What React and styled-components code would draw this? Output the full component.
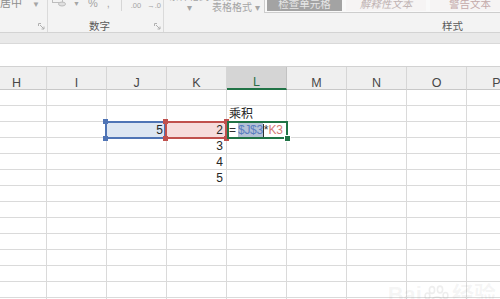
import React from "react";
import styled, { createGlobalStyle } from "styled-components";

const GlobalStyle = createGlobalStyle`
  html, body {
    margin: 0;
    padding: 0;
    background: #ffffff;
  }
  body {
    font-family: "Liberation Sans", "Noto Sans CJK SC", sans-serif;
  }
`;

const COLUMNS = ["H", "I", "J", "K", "L", "M", "N", "O", "P"];
const ROW_COUNT = 14;
const ACTIVE_COL = "L";

const TONES = {
  blue: { line: "#4f74b5", fill: "#dde6f2", text: "#5a7ec0" },
  red: { line: "#c0504d", fill: "#f6dcdc", text: "#d67a78" },
  green: { line: "#217346", fill: "transparent", text: "#217346" },
};

// ---- page frame ----
const Page = styled.div`
  position: relative;
  width: 500px;
  height: 299px;
  overflow: hidden;
  background: #ffffff;
  display: flex;
  flex-direction: column;
`;

// ---- ribbon ----
const RibbonViewport = styled.div`
  flex: none;
  height: 33px;
  box-sizing: border-box;
  overflow: hidden;
  background: #f3f3f3;
  border-bottom: 1px solid #d3d3d3;
  display: flex;
  flex-direction: column;
  justify-content: flex-end;
`;

const Ribbon = styled.div`
  flex: none;
  display: flex;
  height: 35px;
`;

const Group = styled.div`
  flex: none;
  width: ${(p) => p.$width}px;
  box-sizing: border-box;
  display: flex;
  flex-direction: column;
  border-right: 1px solid #dadada;
`;

const GroupBody = styled.div`
  height: 23px;
  display: flex;
  align-items: flex-start;
  justify-content: ${(p) => (p.$end ? "flex-end" : "flex-start")};
  padding-right: ${(p) => (p.$end ? 7 : 0)}px;
  overflow: hidden;
`;

const GroupFoot = styled.div`
  height: 12px;
  display: flex;
  align-items: center;
`;

const GroupLabel = styled.div`
  flex: 1;
  text-align: center;
  font-size: 10.5px;
  line-height: 12px;
  color: #5a5a5a;
`;

const Launcher = styled.div`
  flex: none;
  width: 12px;
  height: 12px;
  display: flex;
  align-items: center;
  justify-content: center;
`;

const Glyph = styled.span`
  flex: none;
  white-space: nowrap;
  font-size: ${(p) => p.$size || 11}px;
  line-height: 12px;
  margin-left: ${(p) => p.$gap || 0}px;
  padding-top: ${(p) => p.$drop || 0}px;
  color: ${(p) => p.$color || "#a5a5a5"};
`;

const RibbonDivider = styled.span`
  flex: none;
  width: 1px;
  height: 14px;
  margin-left: ${(p) => p.$gap}px;
  background: #d6d6d6;
`;

const StackButton = styled.div`
  flex: none;
  width: ${(p) => p.$width}px;
  margin-left: ${(p) => p.$gap || 0}px;
  height: 16px;
  display: flex;
  flex-direction: column;
  align-items: ${(p) => (p.$left ? "flex-start" : "center")};
  justify-content: flex-end;
  font-size: 10px;
  line-height: 11px;
  color: #a5a5a5;
  white-space: nowrap;
`;

const Gallery = styled.div`
  flex: none;
  margin-left: 2px;
  height: 16px;
  box-sizing: border-box;
  display: flex;
  gap: 4px;
  padding: 0 2px 1px;
  background: #f9f9f9;
  border: 1px solid #cdcdcd;
  border-top: none;
`;

const GalleryItem = styled.div`
  flex: none;
  width: ${(p) => p.$width}px;
  display: flex;
  align-items: center;
  justify-content: center;
  font-size: 10.5px;
  line-height: 12px;
  background: ${(p) => p.$bg};
  color: ${(p) => p.$color};
  font-style: ${(p) => (p.$italic ? "italic" : "normal")};
  white-space: nowrap;
`;

// ---- bars under the ribbon ----
const Band = styled.div`
  flex: none;
  height: 11px;
  box-sizing: border-box;
  background: #e9e9e9;
  border-bottom: 1px solid #d9d9d9;
`;

const FormulaBar = styled.div`
  flex: none;
  height: 23px;
  box-sizing: border-box;
  background: #ffffff;
  border-bottom: 1px solid #d2d2d2;
`;

// ---- worksheet ----
const Sheet = styled.div`
  flex: 1;
  display: flex;
  flex-direction: column;
  margin-left: -13px;
`;

const HeaderRow = styled.div`
  flex: none;
  display: flex;
  height: 23px;
`;

const HeaderCell = styled.div`
  flex: none;
  width: 60px;
  height: 100%;
  box-sizing: border-box;
  display: flex;
  align-items: flex-end;
  justify-content: center;
  padding-bottom: 1px;
  font-size: 12.5px;
  line-height: 10px;
  background: ${(p) => (p.$active ? "#d5d5d5" : "#efefef")};
  color: ${(p) => (p.$active ? "#2b6e48" : "#474747")};
  border-right: 1px solid ${(p) => (p.$active ? "#c2c2c2" : "#d6d6d6")};
  border-bottom: ${(p) => (p.$active ? "2px solid #217346" : "1px solid #c8c8c8")};
`;

const Row = styled.div`
  flex: none;
  display: flex;
  height: 16px;
`;

const Cell = styled.div`
  position: relative;
  flex: none;
  width: 60px;
  height: 100%;
  box-sizing: border-box;
  display: flex;
  align-items: flex-end;
  justify-content: ${(p) => (p.$right ? "flex-end" : "flex-start")};
  padding: 0 ${(p) => (p.$right ? 3 : 2)}px;
  font-size: 12px;
  line-height: 14px;
  color: #262626;
  white-space: nowrap;
  background: ${(p) => (p.$tone ? TONES[p.$tone].fill : "#ffffff")};
  border-right: 1px solid #dadada;
  border-bottom: 1px solid #dadada;
`;

const RangeBox = styled.div`
  position: absolute;
  z-index: 2;
  top: -1px;
  bottom: -2px;
  left: ${(p) => p.$left}px;
  right: ${(p) => p.$right}px;
  border: 2px solid ${(p) => TONES[p.$tone].line};
  pointer-events: none;
`;

const Handle = styled.span`
  position: absolute;
  width: 5px;
  height: 5px;
  background: ${(p) => TONES[p.$tone].line};
  ${(p) => (p.$top ? "top: -4px;" : "bottom: -4px;")}
  ${(p) => (p.$left ? "left: -4px;" : "right: -4px;")}
`;

const FillHandle = styled.span`
  position: absolute;
  right: -5px;
  bottom: -5px;
  width: 5px;
  height: 5px;
  background: #217346;
  border: 1px solid #ffffff;
`;

const Operator = styled.span`
  color: #303030;
  margin-right: ${(p) => p.$space || 0}px;
`;

const RefText = styled.span`
  color: ${(p) => TONES[p.$tone].text};
  background: ${(p) => (p.$selected ? "#b4c1d6" : "transparent")};
  letter-spacing: -0.3px;
`;

const Caret = styled.span`
  display: inline-block;
  width: 1px;
  height: 13px;
  background: #303030;
  vertical-align: -2px;
`;

const Watermark = styled.div`
  position: absolute;
  right: 4px;
  bottom: -8px;
  display: flex;
  align-items: flex-end;
  gap: 2px;
  font-size: 22px;
  font-weight: bold;
  line-height: 24px;
  color: rgba(150, 150, 150, 0.1);
  pointer-events: none;
`;

const LauncherIcon = () => (
  <svg width="7" height="7" viewBox="0 0 7 7">
    <path d="M0.5 3V0.5H3" stroke="#b0b0b0" fill="none" />
    <path d="M2 2L6 6M6 3.5V6H3.5" stroke="#b0b0b0" fill="none" />
  </svg>
);

const MoneyIcon = () => (
  <svg width="14" height="10" viewBox="0 0 14 10">
    <rect x="0.5" y="0.5" width="10" height="5" fill="none" stroke="#bdbdbd" />
    <ellipse cx="10" cy="7" rx="3.5" ry="2" fill="#e0e0e0" stroke="#bdbdbd" />
  </svg>
);

const PawIcon = () => (
  <svg width="26" height="22" viewBox="0 0 26 22">
    <g fill="none" stroke="rgba(150,150,150,0.16)" strokeWidth="1.6">
      <ellipse cx="8" cy="5" rx="2.6" ry="3.4" />
      <ellipse cx="16" cy="4.5" rx="2.6" ry="3.4" />
      <ellipse cx="3.5" cy="11" rx="2.4" ry="3" />
      <ellipse cx="21.5" cy="10.5" rx="2.4" ry="3" />
      <path d="M6 20c0-5 3.5-8 7-8s7 3 7 8c-2.5 1.5-11.5 1.5-14 0z" />
    </g>
  </svg>
);

const RibbonBar = () => (
  <RibbonViewport>
    <Ribbon>
      <Group $width={48}>
        <GroupBody $end>
          <Glyph $color="#8e8e8e">合并后居中</Glyph>
          <Glyph $size={8} $gap={10} $drop={2}>▼</Glyph>
        </GroupBody>
        <GroupFoot>
          <GroupLabel />
          <Launcher><LauncherIcon /></Launcher>
        </GroupFoot>
      </Group>

      <Group $width={116}>
        <GroupBody>
          <Glyph $gap={4}><MoneyIcon /></Glyph>
          <Glyph $size={7} $gap={7} $drop={1}>▼</Glyph>
          <Glyph $size={11} $gap={8}>%</Glyph>
          <Glyph $size={11} $gap={9}>,</Glyph>
          <RibbonDivider $gap={11} />
          <Glyph $size={7.5} $gap={9} $drop={3}>.00</Glyph>
          <Glyph $size={7.5} $gap={6} $drop={3}>→.0</Glyph>
        </GroupBody>
        <GroupFoot>
          <GroupLabel>数字</GroupLabel>
          <Launcher><LauncherIcon /></Launcher>
        </GroupFoot>
      </Group>

      <Group $width={590}>
        <GroupBody>
          <StackButton $width={46} $gap={2}>
            <span>条件格式</span>
            <span>▾</span>
          </StackButton>
          <StackButton $width={50} $left>
            <span>套用</span>
            <span>表格格式 ▾</span>
          </StackButton>
          <Gallery>
            <GalleryItem $width={75} $bg="#a3a3a3" $color="#e6e6e6">检查单元格</GalleryItem>
            <GalleryItem $width={80} $bg="#f6f4f4" $color="#c0b3b3" $italic>解释性文本</GalleryItem>
            <GalleryItem $width={80} $bg="#f6f4f4" $color="#c4aaaa">警告文本</GalleryItem>
          </Gallery>
        </GroupBody>
        <GroupFoot>
          <GroupLabel>样式</GroupLabel>
          <Launcher><LauncherIcon /></Launcher>
        </GroupFoot>
      </Group>
    </Ribbon>
  </RibbonViewport>
);

// cell contents keyed by "COL:row"
const CELLS = {
  "L:2": { kind: "text", value: "乘积" },
  "J:3": { kind: "number", value: 5, tone: "blue" },
  "K:3": { kind: "number", value: 2, tone: "red" },
  "L:3": { kind: "formula" },
  "K:4": { kind: "number", value: 3 },
  "K:5": { kind: "number", value: 4 },
  "K:6": { kind: "number", value: 5 },
};

const Corners = ({ tone }) => (
  <>
    <Handle $tone={tone} $top $left />
    <Handle $tone={tone} $top />
    <Handle $tone={tone} $left />
    <Handle $tone={tone} />
  </>
);

const SheetCell = ({ data }) => {
  if (!data) return <Cell />;

  if (data.kind === "formula") {
    return (
      <Cell>
        <Operator $space={2}>=</Operator>
        <RefText $tone="blue" $selected>$J$3</RefText>
        <Caret />
        <Operator>*</Operator>
        <RefText $tone="red">K3</RefText>
        <RangeBox $tone="green" $left={0} $right={-2}>
          <FillHandle />
        </RangeBox>
      </Cell>
    );
  }

  return (
    <Cell $right={data.kind === "number"} $tone={data.tone}>
      {data.value}
      {data.tone && (
        <RangeBox $tone={data.tone} $left={-2} $right={data.tone === "red" ? -1 : 0}>
          <Corners tone={data.tone} />
        </RangeBox>
      )}
    </Cell>
  );
};

const Worksheet = () => {
  const rows = Array.from({ length: ROW_COUNT }, (_, i) => i + 1);

  return (
    <Sheet>
      <HeaderRow>
        {COLUMNS.map((col) => (
          <HeaderCell key={col} $active={col === ACTIVE_COL}>{col}</HeaderCell>
        ))}
      </HeaderRow>
      {rows.map((r) => (
        <Row key={r}>
          {COLUMNS.map((col) => (
            <SheetCell key={col} data={CELLS[`${col}:${r}`]} />
          ))}
        </Row>
      ))}
    </Sheet>
  );
};

const App = () => (
  <>
    <GlobalStyle />
    <Page>
      <RibbonBar />
      <Band />
      <FormulaBar />
      <Worksheet />
      <Watermark>
        <span>Bai</span>
        <PawIcon />
        <span>经验</span>
      </Watermark>
    </Page>
  </>
);

export default App;
